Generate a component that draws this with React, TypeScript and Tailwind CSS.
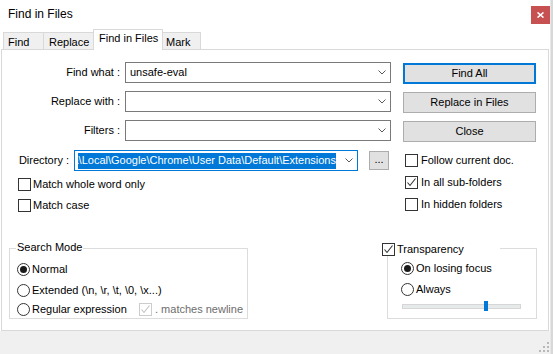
import React from "react";

function Chevron() {
    return (
        <svg width="8" height="5" viewBox="0 0 8 5" className="shrink-0">
            <polyline points="0.5,0.5 4,4 7.5,0.5" fill="none" stroke="#5a5a5a" strokeWidth="1" />
        </svg>
    );
}

function Combo({ value, w }: { value?: string; w: string }) {
    return (
        <div className={`${w} h-[21px] border border-[#7a7a7a] bg-white flex items-center pl-[4px] pr-[4px]`}>
            <span className="flex-1 text-black">{value}</span>
            <Chevron />
        </div>
    );
}

function CheckBox({ checked, disabled }: { checked?: boolean; disabled?: boolean }) {
    const line = disabled ? "#c2c2c2" : "#333333";
    return (
        <div className={`w-[13px] h-[13px] border bg-white shrink-0 flex items-center justify-center ${disabled ? "border-[#cccccc]" : "border-[#333333]"}`}>
            {checked && (
                <svg width="11" height="11" viewBox="0 0 11 11">
                    <polyline points="1.5,5.5 4,8.5 9.5,1.5" fill="none" stroke={line} strokeWidth="1.1" />
                </svg>
            )}
        </div>
    );
}

function Radio({ checked }: { checked?: boolean }) {
    return (
        <div className="w-[13px] h-[13px] rounded-full border border-[#333333] bg-white shrink-0 flex items-center justify-center">
            {checked && <div className="w-[7px] h-[7px] rounded-full bg-[#1a1a1a]" />}
        </div>
    );
}

function Btn({ label, active }: { label: string; active?: boolean }) {
    return (
        <div className={`w-[133px] h-[21px] bg-[#e1e1e1] flex items-center justify-center text-black ${active ? "border-2 border-[#0078d7]" : "border border-[#adadad]"}`}>
            {label}
        </div>
    );
}

export default function App() {
    const tabs = [
        { name: "Find", w: "w-[41px]", pl: "pl-[4px]" },
        { name: "Replace", w: "w-[51px]", pl: "pl-[5px]" },
        { name: "Find in Files", w: "w-[70px]", pl: "pl-[5px]", active: true },
        { name: "Mark", w: "w-[39px]", pl: "pl-[3px]" },
    ];

    return (
        <div className="w-[553px] h-[354px] flex bg-white overflow-hidden font-['Liberation_Sans',Arial,sans-serif] text-[11px] leading-[13px] text-black">
            <div className="w-[550px] h-full flex flex-col">
                {/* title bar */}
                <div className="h-[29px] flex items-start justify-between">
                    <span className="pl-[8px] pt-[7px] text-[12px] leading-[14px]">Find in Files</span>
                    <div className="mt-[6px] w-[19px] h-[18px] bg-[#c75050] flex items-center justify-center">
                        <svg width="7" height="6" viewBox="0 0 7 6">
                            <path d="M0.5 0.5L6.5 5.5M6.5 0.5L0.5 5.5" stroke="#ffffff" strokeWidth="1.6" />
                        </svg>
                    </div>
                </div>

                {/* tabs */}
                <div className="h-[20px] flex items-end pl-[3px]">
                    {tabs.map((t, i) => (
                        <div
                            key={t.name}
                            className={`${t.w} ${t.pl} ${i > 0 ? "-ml-px" : ""} whitespace-nowrap border-t border-l border-r border-[#d9d9d9] ${t.active ? "h-[21px] -mb-px bg-white relative z-10 pt-[2px]" : "h-[17px] bg-[#f0f0f0] pt-[3px]"}`}
                        >
                            {t.name}
                        </div>
                    ))}
                </div>

                {/* panel */}
                <div className="ml-px w-[548px] h-[282px] border border-[#d9d9d9] bg-white flex flex-col">
                    <div className="flex">
                        <div className="w-[401px] flex flex-col">
                            <div className="mt-[12px] flex items-center">
                                <span className="w-[118px] text-right">Find what :</span>
                                <div className="ml-[5px]"><Combo value="unsafe-eval" w="w-[266px]" /></div>
                            </div>
                            <div className="mt-[8px] flex items-center">
                                <span className="w-[118px] text-right">Replace with :</span>
                                <div className="ml-[5px]"><Combo w="w-[266px]" /></div>
                            </div>
                            <div className="mt-[8px] flex items-center">
                                <span className="w-[118px] text-right">Filters :</span>
                                <div className="ml-[5px]"><Combo w="w-[266px]" /></div>
                            </div>
                            <div className="mt-[9px] flex items-center">
                                <span className="w-[67px] text-right">Directory :</span>
                                <div className="ml-[5px] w-[284px] h-[21px] border border-[#0078d7] bg-white flex items-center pl-[3px] pr-[4px]">
                                    <div className="w-[258px] h-[16px] overflow-hidden flex justify-end items-center bg-[#0078d7] text-white whitespace-nowrap">
                                        <span>a\Local\Google\Chrome\User Data\Default\Extensions</span>
                                    </div>
                                    <div className="flex-1" />
                                    <Chevron />
                                </div>
                                <div className="ml-[11px] w-[20px] h-[19px] bg-[#e1e1e1] border border-[#adadad] flex items-center justify-center pb-[3px]">
                                    ...
                                </div>
                            </div>
                            <div className="mt-[7px] ml-[16px] flex items-center gap-[2px]">
                                <CheckBox />
                                <span>Match whole word only</span>
                            </div>
                            <div className="mt-[8px] ml-[16px] flex items-center gap-[2px]">
                                <CheckBox />
                                <span>Match case</span>
                            </div>
                        </div>

                        <div className="w-[133px] flex flex-col">
                            <div className="mt-[13px]"><Btn label="Find All" active /></div>
                            <div className="mt-[8px]"><Btn label="Replace in Files" /></div>
                            <div className="mt-[8px]"><Btn label="Close" /></div>
                            <div className="mt-[12px] ml-[2px] flex items-center gap-[3px]">
                                <CheckBox />
                                <span className="whitespace-nowrap">Follow current doc.</span>
                            </div>
                            <div className="mt-[9px] ml-[2px] flex items-center gap-[3px]">
                                <CheckBox checked />
                                <span className="whitespace-nowrap">In all sub-folders</span>
                            </div>
                            <div className="mt-[9px] ml-[2px] flex items-center gap-[3px]">
                                <CheckBox />
                                <span className="whitespace-nowrap">In hidden folders</span>
                            </div>
                        </div>
                    </div>

                    {/* bottom groups */}
                    <div className="mt-[36px] flex items-start">
                        <div className="ml-[7px] w-[239px] h-[71px] border border-[#dcdcdc] flex flex-col">
                            <span className="-mt-[8px] ml-[6px] px-[1px] w-fit bg-white">Search Mode</span>
                            <div className="mt-[9px] ml-[7px] flex items-center gap-[2px]">
                                <Radio checked />
                                <span>Normal</span>
                            </div>
                            <div className="mt-[8px] ml-[7px] flex items-center gap-[2px]">
                                <Radio />
                                <span>Extended (\n, \r, \t, \0, \x...)</span>
                            </div>
                            <div className="mt-[6px] ml-[7px] flex items-center">
                                <Radio />
                                <span className="ml-[2px] w-[107px]">Regular expression</span>
                                <CheckBox checked disabled />
                                <span className="ml-[3px] text-[#6d6d6d]">. matches newline</span>
                            </div>
                        </div>

                        <div className="ml-[139px] w-[150px] h-[71px] border border-[#dcdcdc] flex flex-col">
                            <div className="-mt-[6px] -ml-[6px] w-[118px] bg-white flex items-center gap-[2px]">
                                <CheckBox checked />
                                <span>Transparency</span>
                            </div>
                            <div className="mt-[6px] ml-[13px] flex items-center gap-[2px]">
                                <Radio checked />
                                <span>On losing focus</span>
                            </div>
                            <div className="mt-[8px] ml-[13px] flex items-center gap-[2px]">
                                <Radio />
                                <span>Always</span>
                            </div>
                            <div className="mt-[8px] ml-[14px] w-[119px] h-[5px] bg-[#e7eaea] border border-[#d6d6d6] relative">
                                <div className="absolute left-[81px] -top-[4px] w-[4px] h-[10px] bg-[#0078d7]" />
                            </div>
                        </div>
                    </div>
                </div>

                {/* footer */}
                <div className="flex-1 bg-[#f0f0f0] flex items-end justify-end pb-[2px] pr-[1px]">
                    <svg width="10" height="10" viewBox="0 0 10 10">
                        <rect x="8" y="0" width="2" height="2" fill="#b8b8b8" />
                        <rect x="4" y="4" width="2" height="2" fill="#b8b8b8" />
                        <rect x="8" y="4" width="2" height="2" fill="#b8b8b8" />
                        <rect x="0" y="8" width="2" height="2" fill="#b8b8b8" />
                        <rect x="4" y="8" width="2" height="2" fill="#b8b8b8" />
                        <rect x="8" y="8" width="2" height="2" fill="#b8b8b8" />
                    </svg>
                </div>
            </div>
            <div className="w-[3px] h-full bg-[#d8d8d8] border-l border-[#e8e8e8]" />
        </div>
    );
}
